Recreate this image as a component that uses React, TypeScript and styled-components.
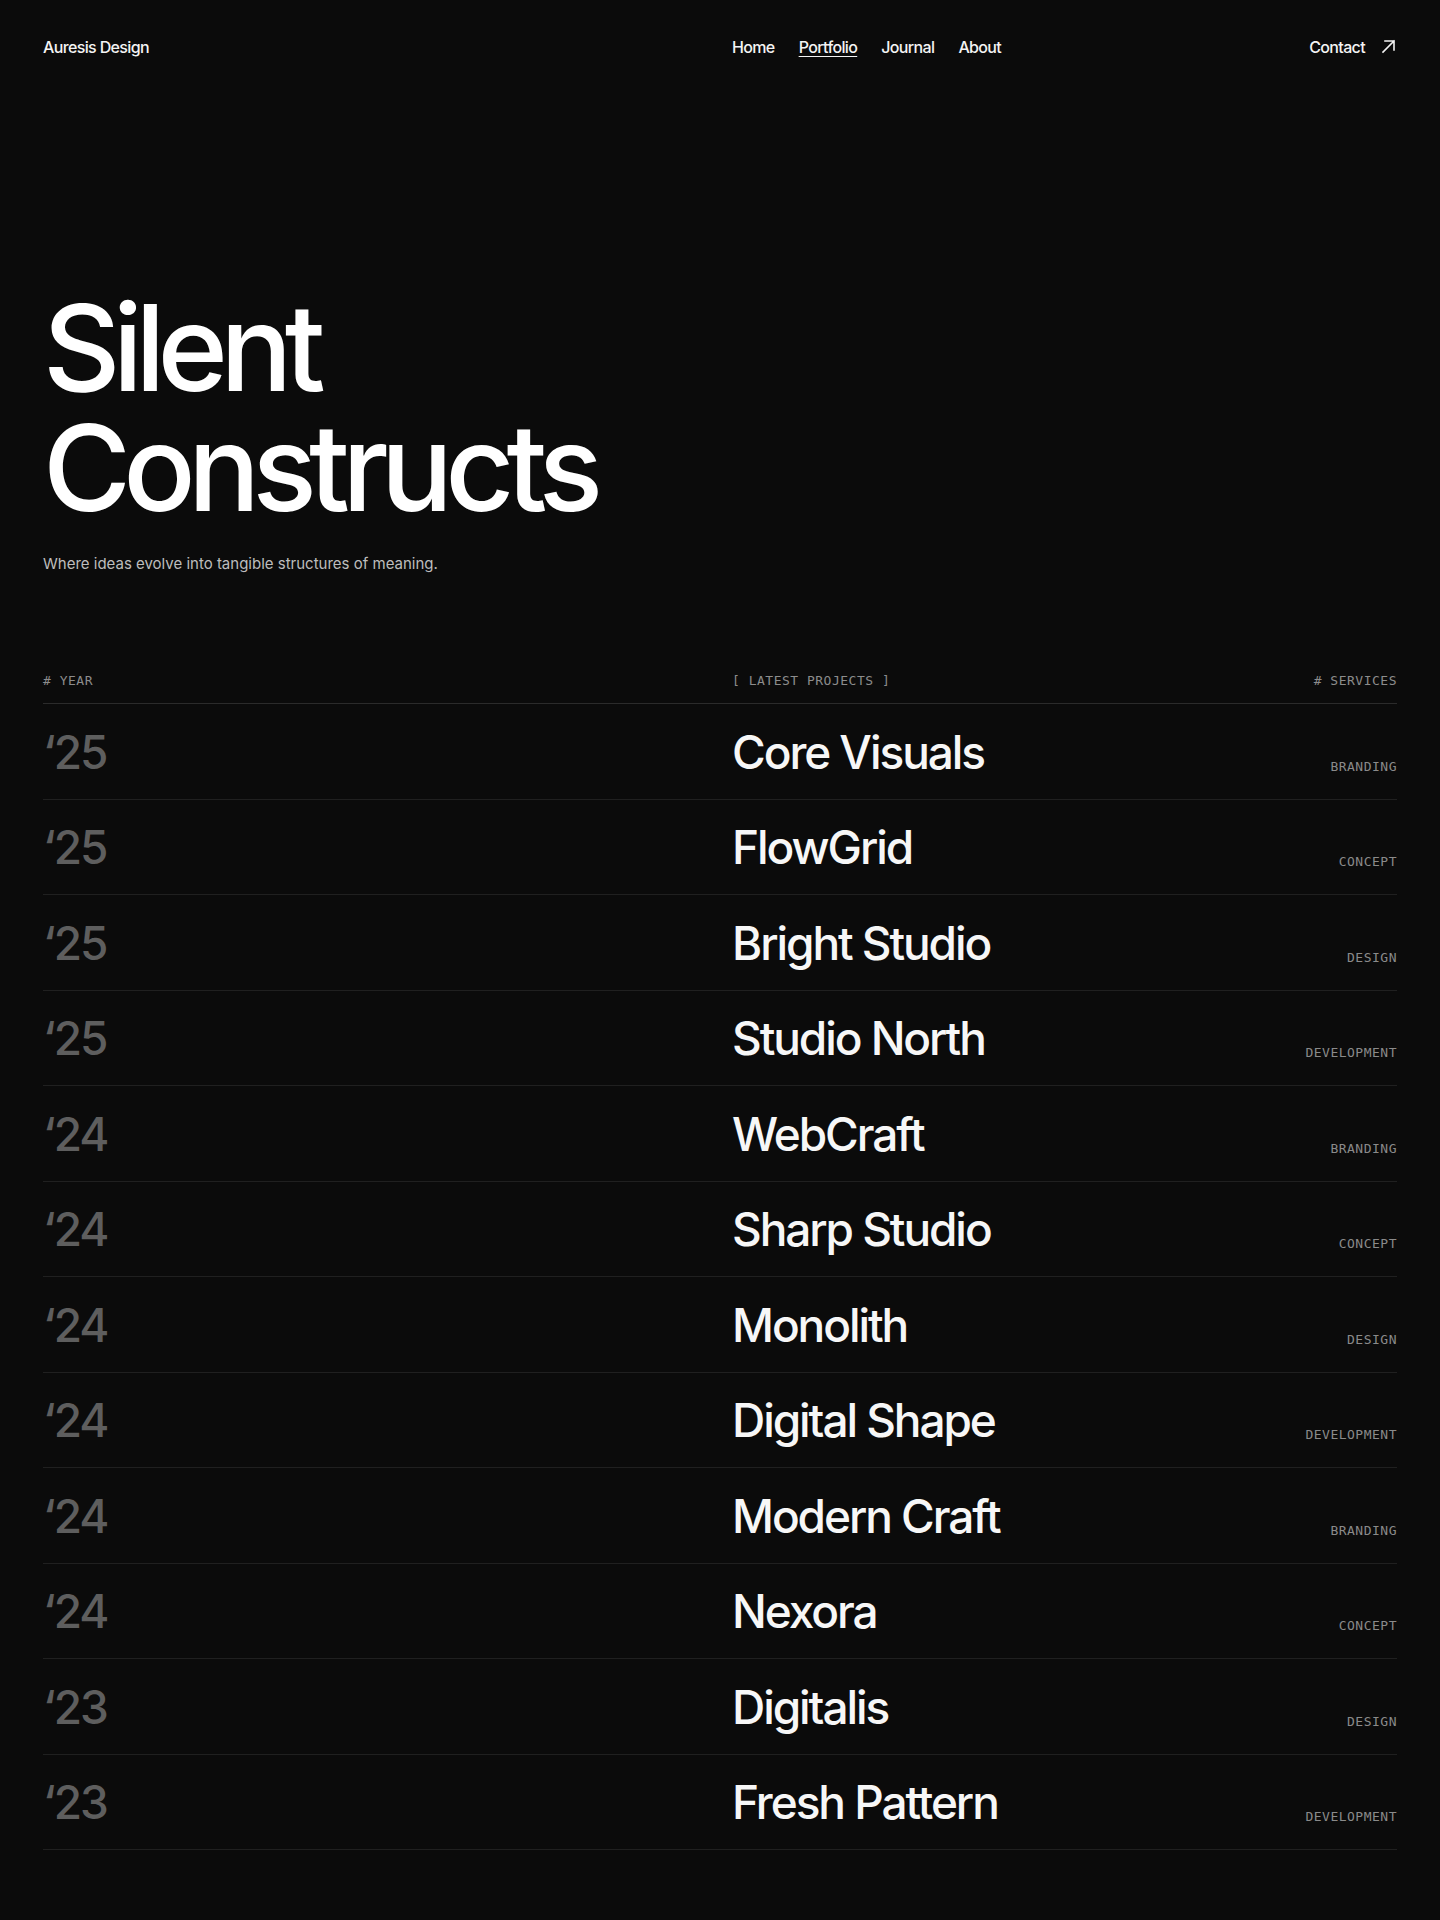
import styled, { createGlobalStyle } from "styled-components";

const GlobalStyle = createGlobalStyle`
    html, body {
        margin: 0;
        padding: 0;
        background: #0b0b0b;
    }
    body {
        font-family: Inter, "Noto Sans", sans-serif;
        color: #f4f4f4;
        -webkit-font-smoothing: antialiased;
    }
    * {
        box-sizing: border-box;
    }
`;

const StyledPage = styled.div`
    padding: 0 43px 70px;
    min-height: 1920px;
`;

const StyledSplit = styled.div`
    display: grid;
    grid-template-columns: 1fr 1fr;
    column-gap: 24px;
`;

const StyledHeader = styled(StyledSplit)`
    padding-top: 35px;
    font-size: 16px;
    line-height: 24px;
    font-weight: 500;
    letter-spacing: -0.04em;
`;

const StyledLogo = styled.a`
    color: #f4f4f4;
    text-decoration: none;
`;

const StyledHalf = styled.div<{ $align?: string }>`
    display: flex;
    justify-content: space-between;
    align-items: ${(p) => p.$align || "center"};
`;

const StyledNav = styled.nav`
    display: flex;
    gap: 24px;
`;

const StyledNavLink = styled.a<{ $active?: boolean }>`
    color: #f4f4f4;
    text-decoration: ${(p) => (p.$active ? "underline" : "none")};
    text-decoration-thickness: 1px;
    text-underline-offset: 3px;
`;

const StyledContact = styled.a`
    display: flex;
    align-items: center;
    gap: 16px;
    color: #f4f4f4;
    text-decoration: none;
`;

const StyledHero = styled.section`
    padding-top: 229px;
`;

const StyledTitle = styled.h1`
    margin: 0;
    font-size: 120px;
    line-height: 1;
    font-weight: 500;
    letter-spacing: -0.065em;
    color: #ffffff;
`;

const StyledTitleLine = styled.span`
    display: block;
    height: 120px;
`;

const StyledSubtitle = styled.p`
    margin: 24px 0 0;
    font-size: 15px;
    line-height: 24px;
    color: #bdbdbd;
`;

const StyledTable = styled.section`
    margin-top: 97px;
`;

const StyledTableHead = styled(StyledSplit)`
    padding-bottom: 14px;
    border-bottom: 1px solid #2b2b2b;
`;

const StyledLabel = styled.span<{ $tone?: string }>`
    font-family: "DejaVu Sans Mono", "Liberation Mono", monospace;
    font-size: 13px;
    line-height: 16px;
    letter-spacing: 0.5px;
    text-transform: uppercase;
    color: ${(p) => p.$tone || "#8c8c8c"};
`;

const StyledRow = styled(StyledSplit)`
    padding: 24.5px 0 24px;
    border-bottom: 1px solid #202020;
    font-size: 46px;
    line-height: 46px;
    font-weight: 500;
    letter-spacing: -0.045em;
`;

const StyledYear = styled.span`
    color: #5e5e5e;
`;

const StyledName = styled.span`
    color: #f7f7f7;
`;

const ArrowIcon = () => (
    <svg width="16" height="16" viewBox="0 0 16 16" fill="none">
        <path
            d="M2 13 L13 2 M4 2 H13 V11"
            stroke="#f4f4f4"
            strokeWidth="1.6"
            strokeLinecap="square"
        />
    </svg>
);

const projects = [
    { year: "25", name: "Core Visuals", service: "Branding" },
    { year: "25", name: "FlowGrid", service: "Concept" },
    { year: "25", name: "Bright Studio", service: "Design" },
    { year: "25", name: "Studio North", service: "Development" },
    { year: "24", name: "WebCraft", service: "Branding" },
    { year: "24", name: "Sharp Studio", service: "Concept" },
    { year: "24", name: "Monolith", service: "Design" },
    { year: "24", name: "Digital Shape", service: "Development" },
    { year: "24", name: "Modern Craft", service: "Branding" },
    { year: "24", name: "Nexora", service: "Concept" },
    { year: "23", name: "Digitalis", service: "Design" },
    { year: "23", name: "Fresh Pattern", service: "Development" },
];

const navItems = ["Home", "Portfolio", "Journal", "About"];

export default function App() {
    return (
        <StyledPage>
            <GlobalStyle />
            <StyledHeader>
                <div>
                    <StyledLogo href="#">Auresis Design</StyledLogo>
                </div>
                <StyledHalf>
                    <StyledNav>
                        {navItems.map((item) => (
                            <StyledNavLink key={item} href="#" $active={item === "Portfolio"}>
                                {item}
                            </StyledNavLink>
                        ))}
                    </StyledNav>
                    <StyledContact href="#">
                        Contact
                        <ArrowIcon />
                    </StyledContact>
                </StyledHalf>
            </StyledHeader>

            <StyledHero>
                <StyledTitle>
                    <StyledTitleLine>Silent</StyledTitleLine>
                    <StyledTitleLine>Constructs</StyledTitleLine>
                </StyledTitle>
                <StyledSubtitle>Where ideas evolve into tangible structures of meaning.</StyledSubtitle>
            </StyledHero>

            <StyledTable>
                <StyledTableHead>
                    <StyledLabel># Year</StyledLabel>
                    <StyledHalf>
                        <StyledLabel>[ Latest Projects ]</StyledLabel>
                        <StyledLabel># Services</StyledLabel>
                    </StyledHalf>
                </StyledTableHead>
                {projects.map((p) => (
                    <StyledRow key={p.name}>
                        <StyledYear>{"\u2018" + p.year}</StyledYear>
                        <StyledHalf $align="flex-end">
                            <StyledName>{p.name}</StyledName>
                            <StyledLabel $tone="#8a8a8a">{p.service}</StyledLabel>
                        </StyledHalf>
                    </StyledRow>
                ))}
            </StyledTable>
        </StyledPage>
    );
}
